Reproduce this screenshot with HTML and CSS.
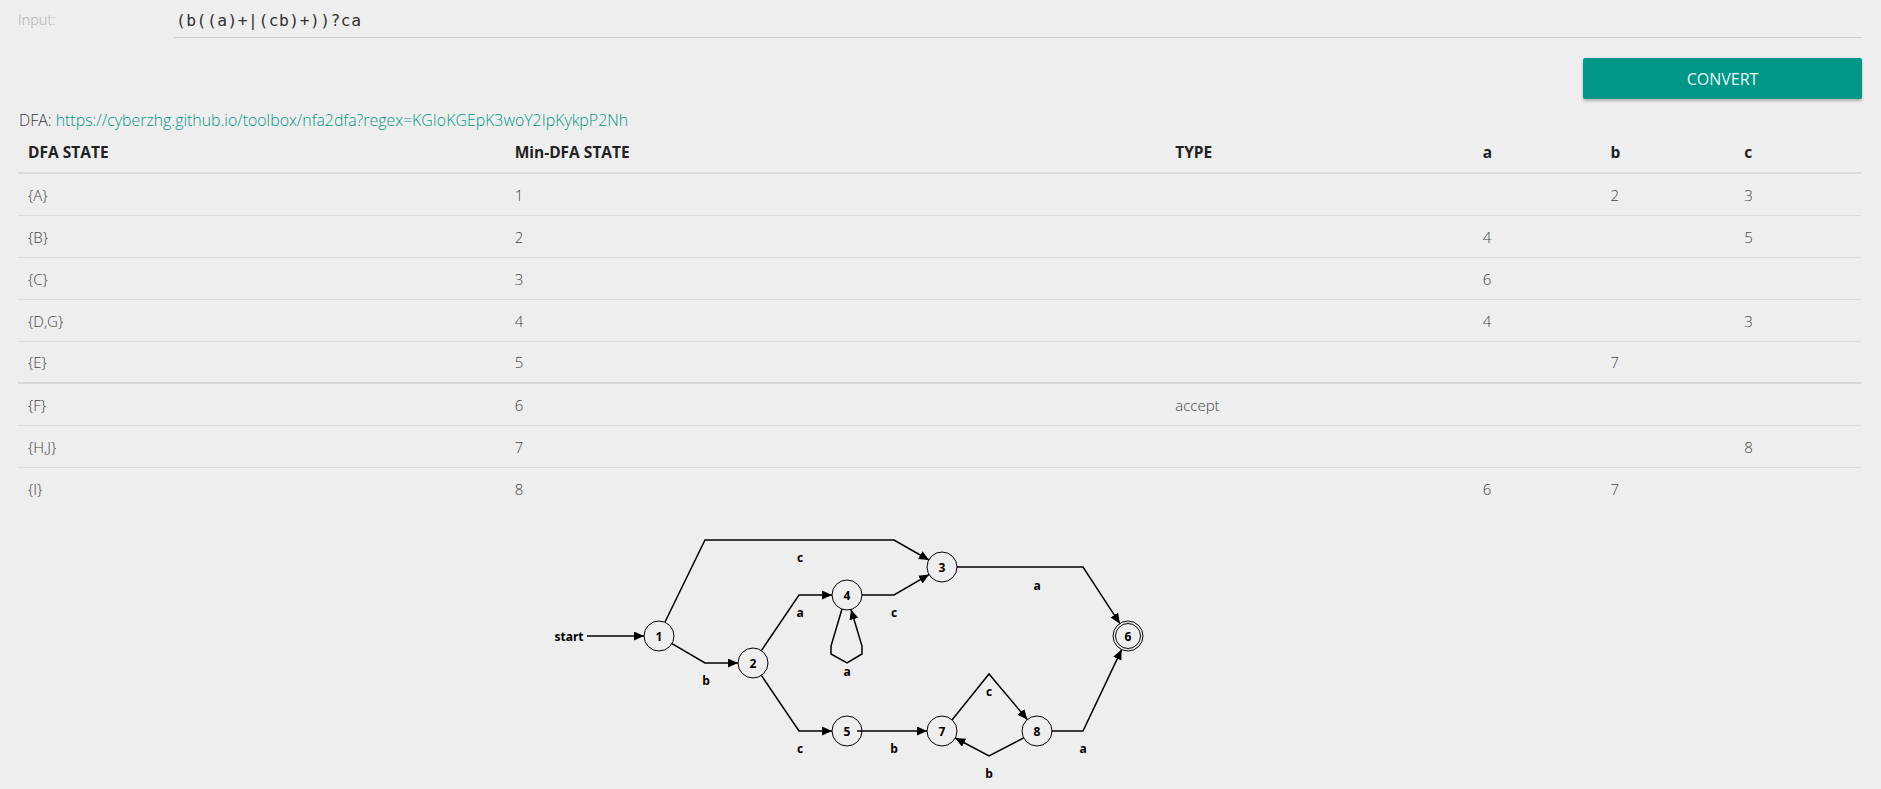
FILE: index.html
```html
<!DOCTYPE html>
<html>
<head>
<meta charset="utf-8">
<title>NFA to DFA</title>
<link rel="stylesheet" href="styles.css">
</head>
<body>
<div class="input-row">
  <label class="input-label">Input:</label>
  <div class="input-field">(b((a)+|(cb)+))?ca</div>
</div>
<div class="actions">
  <button class="convert-btn">CONVERT</button>
</div>
<div class="dfa-link">DFA: <a href="#">https://cyberzhg.github.io/toolbox/nfa2dfa?regex=KGIoKGEpK3woY2IpKykpP2Nh</a></div>
<table class="dfa-table">
  <colgroup>
    <col class="c1"><col class="c2"><col class="c3"><col class="c4"><col class="c5"><col class="c6">
  </colgroup>
  <thead>
    <tr><th>DFA STATE</th><th>Min-DFA STATE</th><th>TYPE</th><th>a</th><th>b</th><th>c</th></tr>
  </thead>
  <tbody>
    <tr><td>{A}</td><td>1</td><td></td><td></td><td>2</td><td>3</td></tr>
    <tr><td>{B}</td><td>2</td><td></td><td>4</td><td></td><td>5</td></tr>
    <tr><td>{C}</td><td>3</td><td></td><td>6</td><td></td><td></td></tr>
    <tr><td>{D,G}</td><td>4</td><td></td><td>4</td><td></td><td>3</td></tr>
    <tr class="heavy"><td>{E}</td><td>5</td><td></td><td></td><td>7</td><td></td></tr>
    <tr><td>{F}</td><td>6</td><td>accept</td><td></td><td></td><td></td></tr>
    <tr><td>{H,J}</td><td>7</td><td></td><td></td><td></td><td>8</td></tr>
    <tr class="last"><td>{I}</td><td>8</td><td></td><td>6</td><td>7</td><td></td></tr>
  </tbody>
</table>
<svg class="graph" width="1881" height="275" viewBox="0 510 1881 275">
  <defs>
    <marker id="arr" markerUnits="userSpaceOnUse" markerWidth="11" markerHeight="10" refX="10" refY="4.5" orient="auto">
      <path d="M0,0 L10,4.5 L0,9 z" fill="#000"/>
    </marker>
  </defs>
  <g class="edges" fill="none" stroke="#000" stroke-width="1.5" marker-end="url(#arr)">
    <path d="M587,637 L644,637"/>
    <path d="M665,623 L705,541 L894,541 L929,561"/>
    <path d="M672,644.6 L705,664 L738,664"/>
    <path d="M761.4,651.6 L799,596 L832,596"/>
    <path d="M862,596 L894,596 L929,575.6"/>
    <path d="M842,610 L831,647 L831,655 L847,664 L862,655 L862,647 L851,610.5"/>
    <path d="M761.4,676.4 L799,732 L832,732"/>
    <path d="M857,732 L927,732"/>
    <path d="M952,721 L989,675 L1027.3,720.5"/>
    <path d="M1023.7,738.9 L989,757 L955.2,739"/>
    <path d="M957,568 L1083,568 L1119.8,624.4"/>
    <path d="M1052,732 L1083,732 L1121.6,650.6"/>
  </g>
  <g class="nodes" fill="none" stroke="#000" stroke-width="1">
    <circle cx="659" cy="637" r="15"/>
    <circle cx="753" cy="664" r="15"/>
    <circle cx="942" cy="568" r="15"/>
    <circle cx="847" cy="596" r="15"/>
    <circle cx="847" cy="732" r="15"/>
    <circle cx="942" cy="732" r="15"/>
    <circle cx="1037" cy="732" r="15"/>
    <circle cx="1128" cy="637" r="15"/>
    <circle cx="1128" cy="637" r="12.5"/>
  </g>
  <g class="labels">
    <text x="569" y="637">start</text>
    <text x="659" y="637">1</text>
    <text x="753" y="664">2</text>
    <text x="942" y="568">3</text>
    <text x="847" y="596">4</text>
    <text x="847" y="732">5</text>
    <text x="1128" y="637">6</text>
    <text x="942" y="732">7</text>
    <text x="1037" y="732">8</text>
    <text x="800" y="558">c</text>
    <text x="706" y="681">b</text>
    <text x="800" y="613">a</text>
    <text x="894" y="613">c</text>
    <text x="847" y="672">a</text>
    <text x="800" y="749">c</text>
    <text x="894" y="749">b</text>
    <text x="989" y="692">c</text>
    <text x="989" y="774">b</text>
    <text x="1037" y="586">a</text>
    <text x="1083" y="749">a</text>
  </g>
</svg>
</body>
</html>
```
FILE: styles.css
```css
html, body {
  margin: 0;
  padding: 0;
  background: #eeeeee;
  overflow: hidden;
}
body {
  font-family: "Open Sans", "Liberation Sans", sans-serif;
  font-weight: 300;
  color: #444;
}
.input-row {
  display: flex;
  align-items: flex-end;
  padding-left: 18px;
  padding-right: 19px;
  height: 37px;
}
.input-label {
  width: 156px;
  flex: none;
  font-size: 14.5px;
  color: #b0b0b0;
  align-self: center;
  padding-top: 2px;
}
.input-field {
  flex: 1;
  height: 36px;
  box-sizing: border-box;
  border-bottom: 1px solid #cfcfcf;
  font-family: "DejaVu Sans Mono", "Liberation Mono", monospace;
  font-weight: 400;
  font-size: 16.3px;
  letter-spacing: 0.5px;
  line-height: 38px;
  color: #333;
  padding-left: 2px;
  margin-bottom: -1px;
}
.actions {
  display: flex;
  justify-content: flex-end;
  padding-right: 19px;
  margin-top: 21px;
}
.convert-btn {
  width: 279px;
  height: 41px;
  border: none;
  border-radius: 2px;
  background: #009688;
  color: #e8f6f4;
  font-family: "Open Sans", "Liberation Sans", sans-serif;
  font-size: 16px;
  font-weight: 400;
  box-shadow: 0 2px 3px rgba(0, 0, 0, 0.25);
  cursor: pointer;
}
.dfa-link {
  padding-left: 19px;
  margin-top: 9px;
  font-size: 15.9px;
  line-height: 24px;
  color: #333;
}
.dfa-link a {
  color: #009688;
  text-decoration: none;
}
.dfa-table {
  margin: 0 20px 0 18px;
  width: 1843px;
  border-collapse: collapse;
  table-layout: fixed;
  font-size: 15px;
}
.c1 { width: 484px; }
.c2 { width: 657px; }
.c3 { width: 306px; }
.c4 { width: 127px; }
.c5 { width: 133px; }
.c6 { width: 126px; }
.dfa-table th {
  text-align: left;
  font-weight: 700;
  font-size: 15.5px;
  color: #222;
  padding: 0 10px;
  height: 40px;
  border-bottom: 2px solid #dadada;
}
.dfa-table td {
  padding: 0 10px;
  height: 41px;
  border-bottom: 1px solid #dcdcdc;
  color: #444;
}
.dfa-table tr.heavy td {
  height: 40px;
  border-bottom: 2px solid #d8d8d8;
}
.dfa-table tr.last td {
  border-bottom: none;
}
.graph {
  display: block;
}
.labels text {
  font-family: "Open Sans", "Liberation Sans", sans-serif;
  font-weight: 700;
  font-size: 12px;
  fill: #000;
  text-anchor: middle;
  dominant-baseline: central;
}
```
